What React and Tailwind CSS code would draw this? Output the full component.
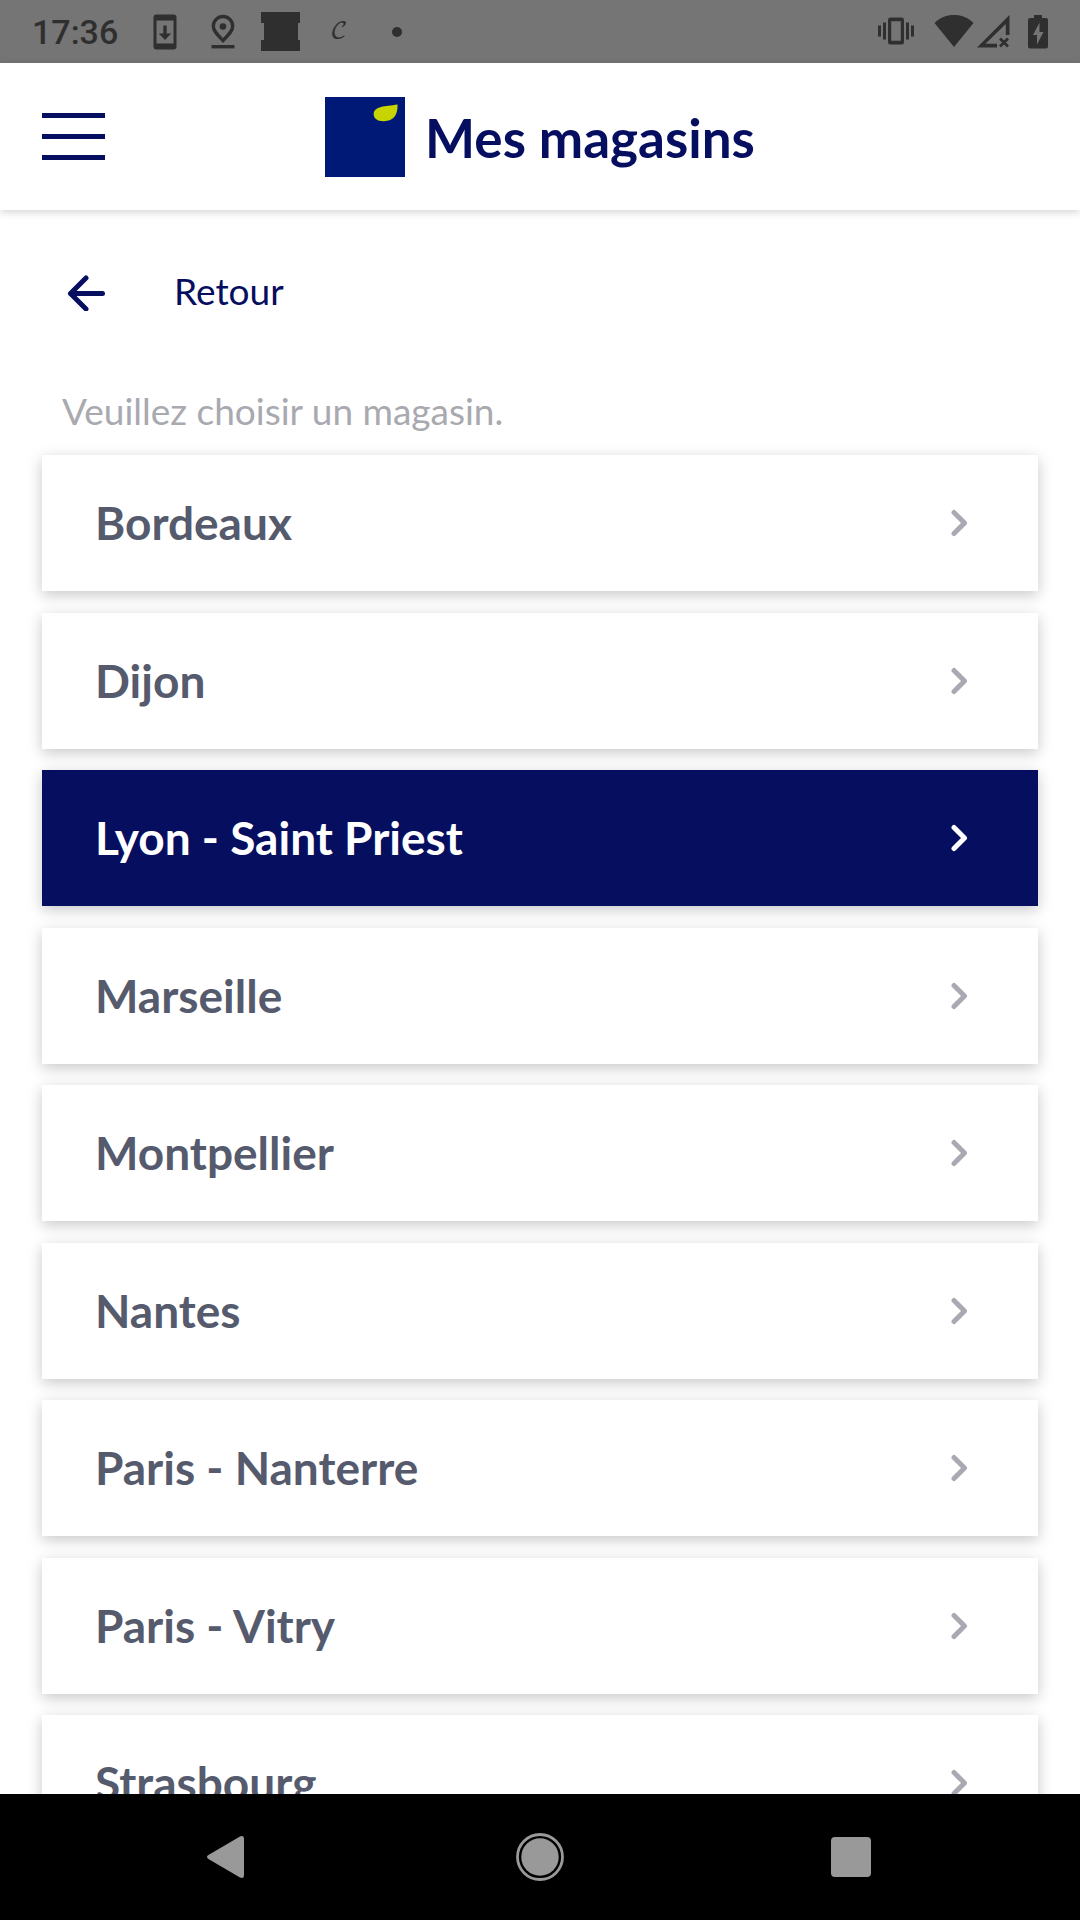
// App.jsx
import { useState } from 'react';

const STORES = [
  'Bordeaux',
  'Dijon',
  'Lyon - Saint Priest',
  'Marseille',
  'Montpellier',
  'Nantes',
  'Paris - Nanterre',
  'Paris - Vitry',
  'Strasbourg',
];

const StatusBar = () => (
  <div className="flex h-[63px] shrink-0 items-center justify-between bg-[#757575] pr-[22px] pl-8 text-[#2f2f2f]">
    <div className="flex items-center gap-[18px]">
      <span className="w-[95px] font-['Roboto'] text-[34px] leading-10 font-medium">17:36</span>

      {/* System update */}
      <svg className="size-10" viewBox="0 0 40 40" fill="currentColor">
        <path
          fillRule="evenodd"
          d="M11.500 2.500h17a3 3 0 0 1 3 3v29a3 3 0 0 1-3 3h-17a3 3 0 0 1-3-3v-29a3 3 0 0 1 3-3zM11.500 8.500v23h17v-23z"
        />
        <path d="M18.300 13.500h3.400v8h4.500l-6.200 6.500-6.200-6.500h4.500z" />
      </svg>

      {/* Location */}
      <svg className="size-10" viewBox="0 0 40 40">
        <path
          d="M20 28.500C14 22.500 10.300 18.500 10.300 14.200a9.700 9.700 0 0 1 19.400 0C29.700 18.500 26 22.500 20 28.500z"
          fill="none"
          stroke="currentColor"
          strokeWidth="3.400"
        />
        <circle cx="20" cy="14.500" r="3.300" fill="currentColor" />
        <path d="M8.500 33h23v3.400h-23z" fill="currentColor" />
      </svg>

      <svg className="size-10" viewBox="0 0 40 40" fill="currentColor">
        <path d="M0 0h39v11h-2v17h2v11h-39v-11h3v-17h-3z" />
      </svg>

      <span className="w-10 text-center font-['DejaVu_Math_TeX_Gyre','DejaVu_Serif',serif] text-[24px] leading-10">𝒞</span>

      <span className="flex w-10 justify-center">
        <span className="size-[10px] rounded-full bg-[#2f2f2f]" />
      </span>
    </div>

    <div className="flex items-center">
      {/* Vibrate */}
      <svg className="mr-[18px] size-10" viewBox="0 0 40 40" fill="currentColor">
        <path
          fillRule="evenodd"
          d="M14.500 5.500h11a2.500 2.500 0 0 1 2.500 2.500v22a2.500 2.500 0 0 1-2.500 2.500h-11a2.500 2.500 0 0 1-2.500-2.500v-22a2.500 2.500 0 0 1 2.500-2.500zM15.200 9.300v19.400h9.600v-19.400z"
        />
        <path d="M2 13.500h3v11h-3zM7 10.500h3v17h-3zM30 10.500h3v17h-3zM35 13.500h3v11h-3z" />
      </svg>

      {/* Wifi */}
      <svg className="size-10" viewBox="0 0 40 40" fill="currentColor">
        <path d="M20 35 .5 11C6 5.500 12.500 3 20 3s14 2.500 19.500 8z" />
      </svg>

      {/* Mobile signal, no data */}
      <svg className="mr-1 size-10" viewBox="0 0 40 40">
        <path d="M35.500 3v20h-3.700V12L11.500 31.700h11.500V35.500H3z" fill="currentColor" />
        <path d="m26 26.500 8 8m0-8-8 8" stroke="currentColor" strokeWidth="2.800" />
      </svg>

      {/* Battery charging */}
      <svg className="size-10" viewBox="0 0 40 40">
        <path
          d="M16 3h8v3h4a2 2 0 0 1 2 2v26.500a2 2 0 0 1-2 2h-16a2 2 0 0 1-2-2v-26.500a2 2 0 0 1 2-2h4z"
          fill="currentColor"
        />
        <path d="M21.500 10.500 15 23h4v9.500L25.500 20h-4z" fill="#757575" />
      </svg>
    </div>
  </div>
);

const Header = () => (
  <header className="z-10 grid h-[147px] shrink-0 grid-cols-[1fr_auto_1fr] items-center bg-white px-[42px] shadow-[0_2px_8px_rgba(0,0,0,0.18)]">
    <button type="button" aria-label="Menu" className="flex w-[63px] flex-col gap-4">
      <span className="h-[5px] w-full bg-[#060e60]" />
      <span className="h-[5px] w-full bg-[#060e60]" />
      <span className="h-[5px] w-full bg-[#060e60]" />
    </button>

    <div className="flex items-center gap-5">
      <svg className="size-20" viewBox="0 0 80 80">
        <path d="M0 0h80v80H0z" fill="#001977" />
        <path d="M72.500 7.500C73 18 68.500 24 59 24.200 52 24.400 48.500 21 48.700 17 49 9 60 9.500 72.500 7.500z" fill="#c8d400" />
      </svg>
      <h1 className="pt-[2px] text-[53px] leading-[64px] font-bold">Mes magasins</h1>
    </div>
  </header>
);

const StoreRow = ({ name, selected, onSelect }) => (
  <li className="odd:mb-[22px] even:mb-[21px]">
    <button
      type="button"
      onClick={onSelect}
      className={`flex h-[136px] w-full items-center justify-between pr-[70px] pl-[53px] text-left shadow-[0_4px_14px_rgba(0,0,0,0.22)] ${
        selected ? 'bg-[#060e60] text-white' : 'bg-white text-[#555a6d]'
      }`}
    >
      <span className="text-[46px] leading-[56px] font-bold">{name}</span>
      <svg
        className={`h-7 w-[18px] ${selected ? 'text-white' : 'text-[#a9a9b4]'}`}
        viewBox="0 0 18 28"
        fill="none"
        stroke="currentColor"
        strokeWidth="5"
        strokeLinecap="round"
        strokeLinejoin="round"
      >
        <path d="M4 3.500 14.500 14 4 24.500" />
      </svg>
    </button>
  </li>
);

const NavigationBar = () => (
  <nav className="z-10 flex h-[126px] shrink-0 items-center justify-between bg-black px-[19%] text-[#999999]">
    <button type="button" aria-label="Précédent">
      <svg className="size-12" viewBox="0 0 48 48" fill="currentColor">
        <path d="M3 22.300 35 3.500Q39 2 39 6v36Q39 46 35 44.500L3 25.700Q1 24 3 22.300z" />
      </svg>
    </button>
    <button type="button" aria-label="Accueil">
      <svg className="size-12" viewBox="0 0 48 48">
        <circle cx="24" cy="24" r="22.500" fill="none" stroke="currentColor" strokeWidth="2.800" />
        <circle cx="24" cy="24" r="18.700" fill="currentColor" />
      </svg>
    </button>
    <button type="button" aria-label="Applications récentes">
      <svg className="size-12" viewBox="0 0 48 48" fill="currentColor">
        <rect x="4" y="4" width="40" height="40" rx="4" />
      </svg>
    </button>
  </nav>
);

const App = () => {
  const [selected, setSelected] = useState('Lyon - Saint Priest');

  return (
    <div className="flex h-screen flex-col overflow-hidden bg-white font-['Lato',sans-serif] text-[#060e60]">
      <StatusBar />
      <Header />

      <main className="min-h-0 flex-1 overflow-y-auto px-[42px] pt-[57px] [scrollbar-width:none]">
        <button type="button" className="flex items-center gap-[68px] pl-6 text-[37px] leading-[48px]">
          <svg
            className="size-10"
            viewBox="0 0 40 40"
            fill="none"
            stroke="currentColor"
            strokeWidth="5"
            strokeLinecap="round"
            strokeLinejoin="round"
          >
            <path d="M20 7 4.500 22.500 20 38M4.500 22.500h32" />
          </svg>
          Retour
        </button>

        <p className="mt-[72px] mb-5 pl-5 text-[37px] leading-[48px] text-[#a9a9b0]">
          Veuillez choisir un magasin.
        </p>

        <ul>
          {STORES.map((name) => (
            <StoreRow
              key={name}
              name={name}
              selected={name === selected}
              onSelect={() => setSelected(name)}
            />
          ))}
        </ul>
      </main>

      <NavigationBar />
    </div>
  );
};

export default App;
